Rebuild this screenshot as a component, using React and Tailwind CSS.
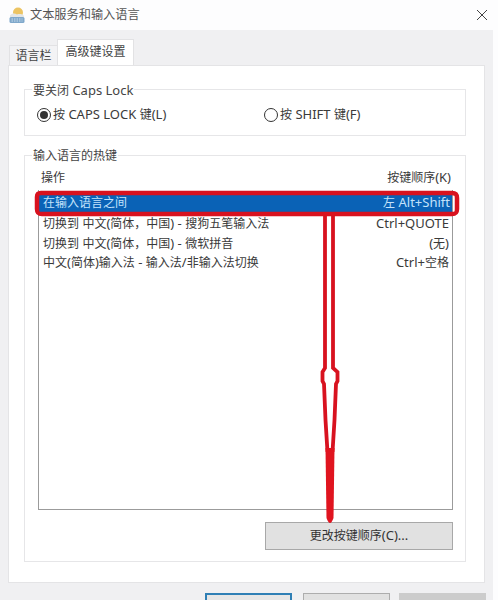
function T({ children }) {
  const parts = children.split(/([\x20-\x7e]+)/);
  return (
    <span className="whitespace-pre">
      {parts.map((p, i) =>
        /^[\x20-\x7e]+$/.test(p) ? <span key={i} className="text-[13px]">{p}</span> : p
      )}
    </span>
  );
}
function Radio({ checked }) {
  return (
    <span className="flex h-[14px] w-[14px] shrink-0 items-center justify-center rounded-full border border-[#333] bg-white">
      {checked && <span className="h-[8px] w-[8px] rounded-full bg-[#333]" />}
    </span>
  );
}
function Group({ title, className, children }) {
  return (
    <div className={"relative border border-[#e6e6e8] " + className}>
      <span className="absolute left-[7px] top-[-8px] bg-white px-[1px] text-[12px] leading-[16px] text-[#444]"><T>{title}</T></span>
      {children}
    </div>
  );
}
const rows = [
  ["切换到 中文(简体，中国) - 搜狗五笔输入法", "Ctrl+QUOTE"],
  ["切换到 中文(简体，中国) - 微软拼音", "(无)"],
  ["中文(简体)输入法 - 输入法/非输入法切换", "Ctrl+空格"],
];
export default function App() {
  return (
    <div className="relative flex h-[600px] w-[498px] flex-col overflow-hidden bg-[#fdfdfe] font-['Noto_Sans','Noto_Sans_CJK_SC',sans-serif] text-[12px] text-[#3a3a3a]">
      <div className="flex h-[30px] shrink-0 items-center pl-[9px] pr-[9px]">
        <svg width="16" height="17" viewBox="0 0 16 17" className="mr-[5px] shrink-0">
          <circle cx="9" cy="5.500" r="5" fill="#ecc463" />
          <path d="M1 8.500c2-2.500 5-2.500 7-1 2-1 6-.5 7 1.500v2H1z" fill="#e3e6e6" />
          <rect x="0.500" y="10" width="15" height="6" rx="1.500" fill="#7fa8cb" />
          <path d="M2.500 12h11M2.500 14h11" stroke="#dce8f2" strokeWidth="0.800" strokeDasharray="1.500 1" />
        </svg>
        <span className="text-[12.200px] leading-[16px] text-[#555]">文本服务和输入语言</span>
        <svg width="12" height="12" viewBox="0 0 12 12" className="ml-auto mr-[1px]">
          <path d="M1 1l10 10M11 1L1 11" stroke="#444" strokeWidth="1" fill="none" />
        </svg>
      </div>
      <div className="mr-[5px] flex min-h-0 flex-1 flex-col bg-[#f0f0f2] pl-[8px] pr-[8px] pt-[9px]">
        <div className="flex h-[26px] shrink-0 items-end pl-[1px]">
          <div className="flex h-[20px] w-[48px] items-center justify-center border-l border-t border-[#e2e2e4] bg-[#f3f3f5] text-[12px] text-[#444]">语言栏</div>
          <div className="flex h-[26px] w-[77px] items-center justify-center border-x border-t border-[#e2e2e4] bg-white pb-[1px] text-[12px] text-[#444]">高级键设置</div>
        </div>
        <div className="flex h-[518px] shrink-0 flex-col border border-[#e4e4e6] bg-white pl-[15px] pr-[18px] pt-[23px]">
          <Group title="要关闭 Caps Lock" className="flex h-[47px] shrink-0 items-center pl-[12px] pt-[5px]">
            <div className="flex w-[227px] items-center gap-[2px]"><Radio checked /><T>按 CAPS LOCK 键(L)</T></div>
            <div className="flex items-center gap-[2px]"><Radio /><T>按 SHIFT 键(F)</T></div>
          </Group>
          <Group title="输入语言的热键" className="mt-[19px] flex h-[407px] shrink-0 flex-col pl-[13px] pr-[12px] pt-[10px]">
            <div className="flex h-[24px] shrink-0 items-center justify-between pl-[3px] pr-[2px]">
              <span>操作</span><T>按键顺序(K)</T>
            </div>
            <div className="flex h-[320px] shrink-0 flex-col border-x border-b border-[#9b9b9b] pt-[2px]">
              <div className="mb-[2px] flex h-[20px] shrink-0 items-center justify-between bg-[#0a62b6] pl-[4px] pr-[2px] pt-[1px] text-[#c4e2fb]">
                <span>在输入语言之间</span><T>左 Alt+Shift</T>
              </div>
              {rows.map(([a, b]) => (
                <div key={a} className="flex h-[19.500px] shrink-0 items-center justify-between pl-[4px] pr-[3px]">
                  <T>{a}</T><T>{b}</T>
                </div>
              ))}
            </div>
            <div className="mt-[12px] flex justify-end">
              <button className="h-[28px] w-[188px] border border-[#a8a8a8] bg-[#e1e1e1] text-[12px] text-[#333]"><T>更改按键顺序(C)...</T></button>
            </div>
          </Group>
        </div>
        <div className="mr-[-1px] mt-[10px] flex shrink-0 justify-end">
          <div className="h-[23px] w-[87px] border-2 border-[#2f7fb5] bg-[#e6e6e6]" />
          <div className="ml-[11px] h-[23px] w-[87px] border border-[#adadad] bg-[#e1e1e1]" />
          <div className="ml-[9px] h-[23px] w-[87px] bg-[#cccccc]" />
        </div>
      </div>
      <svg width="498" height="600" viewBox="0 0 498 600" className="pointer-events-none absolute left-0 top-0">
        <path d="M41 193H452C456 193 457 194.500 457 198V209C457 213 456 214 452 214H42C38 214 37 213 37 209V197C37 194 38 193 41 193Z" fill="none" stroke="#d8121f" strokeWidth="4.500" />
        <path d="M325 215V368L322.500 372V381L324 384L325.500 420L327.500 452" fill="none" stroke="#d8121f" strokeWidth="3.800" />
        <path d="M333 215V368L337.500 372V381L336 384L334.500 420L332.500 452" fill="none" stroke="#d8121f" strokeWidth="3.800" />
        <path d="M325.500 448H334.500L333.500 518Q330 528 326.500 518Z" fill="#e0141f" />
      </svg>
    </div>
  );
}
